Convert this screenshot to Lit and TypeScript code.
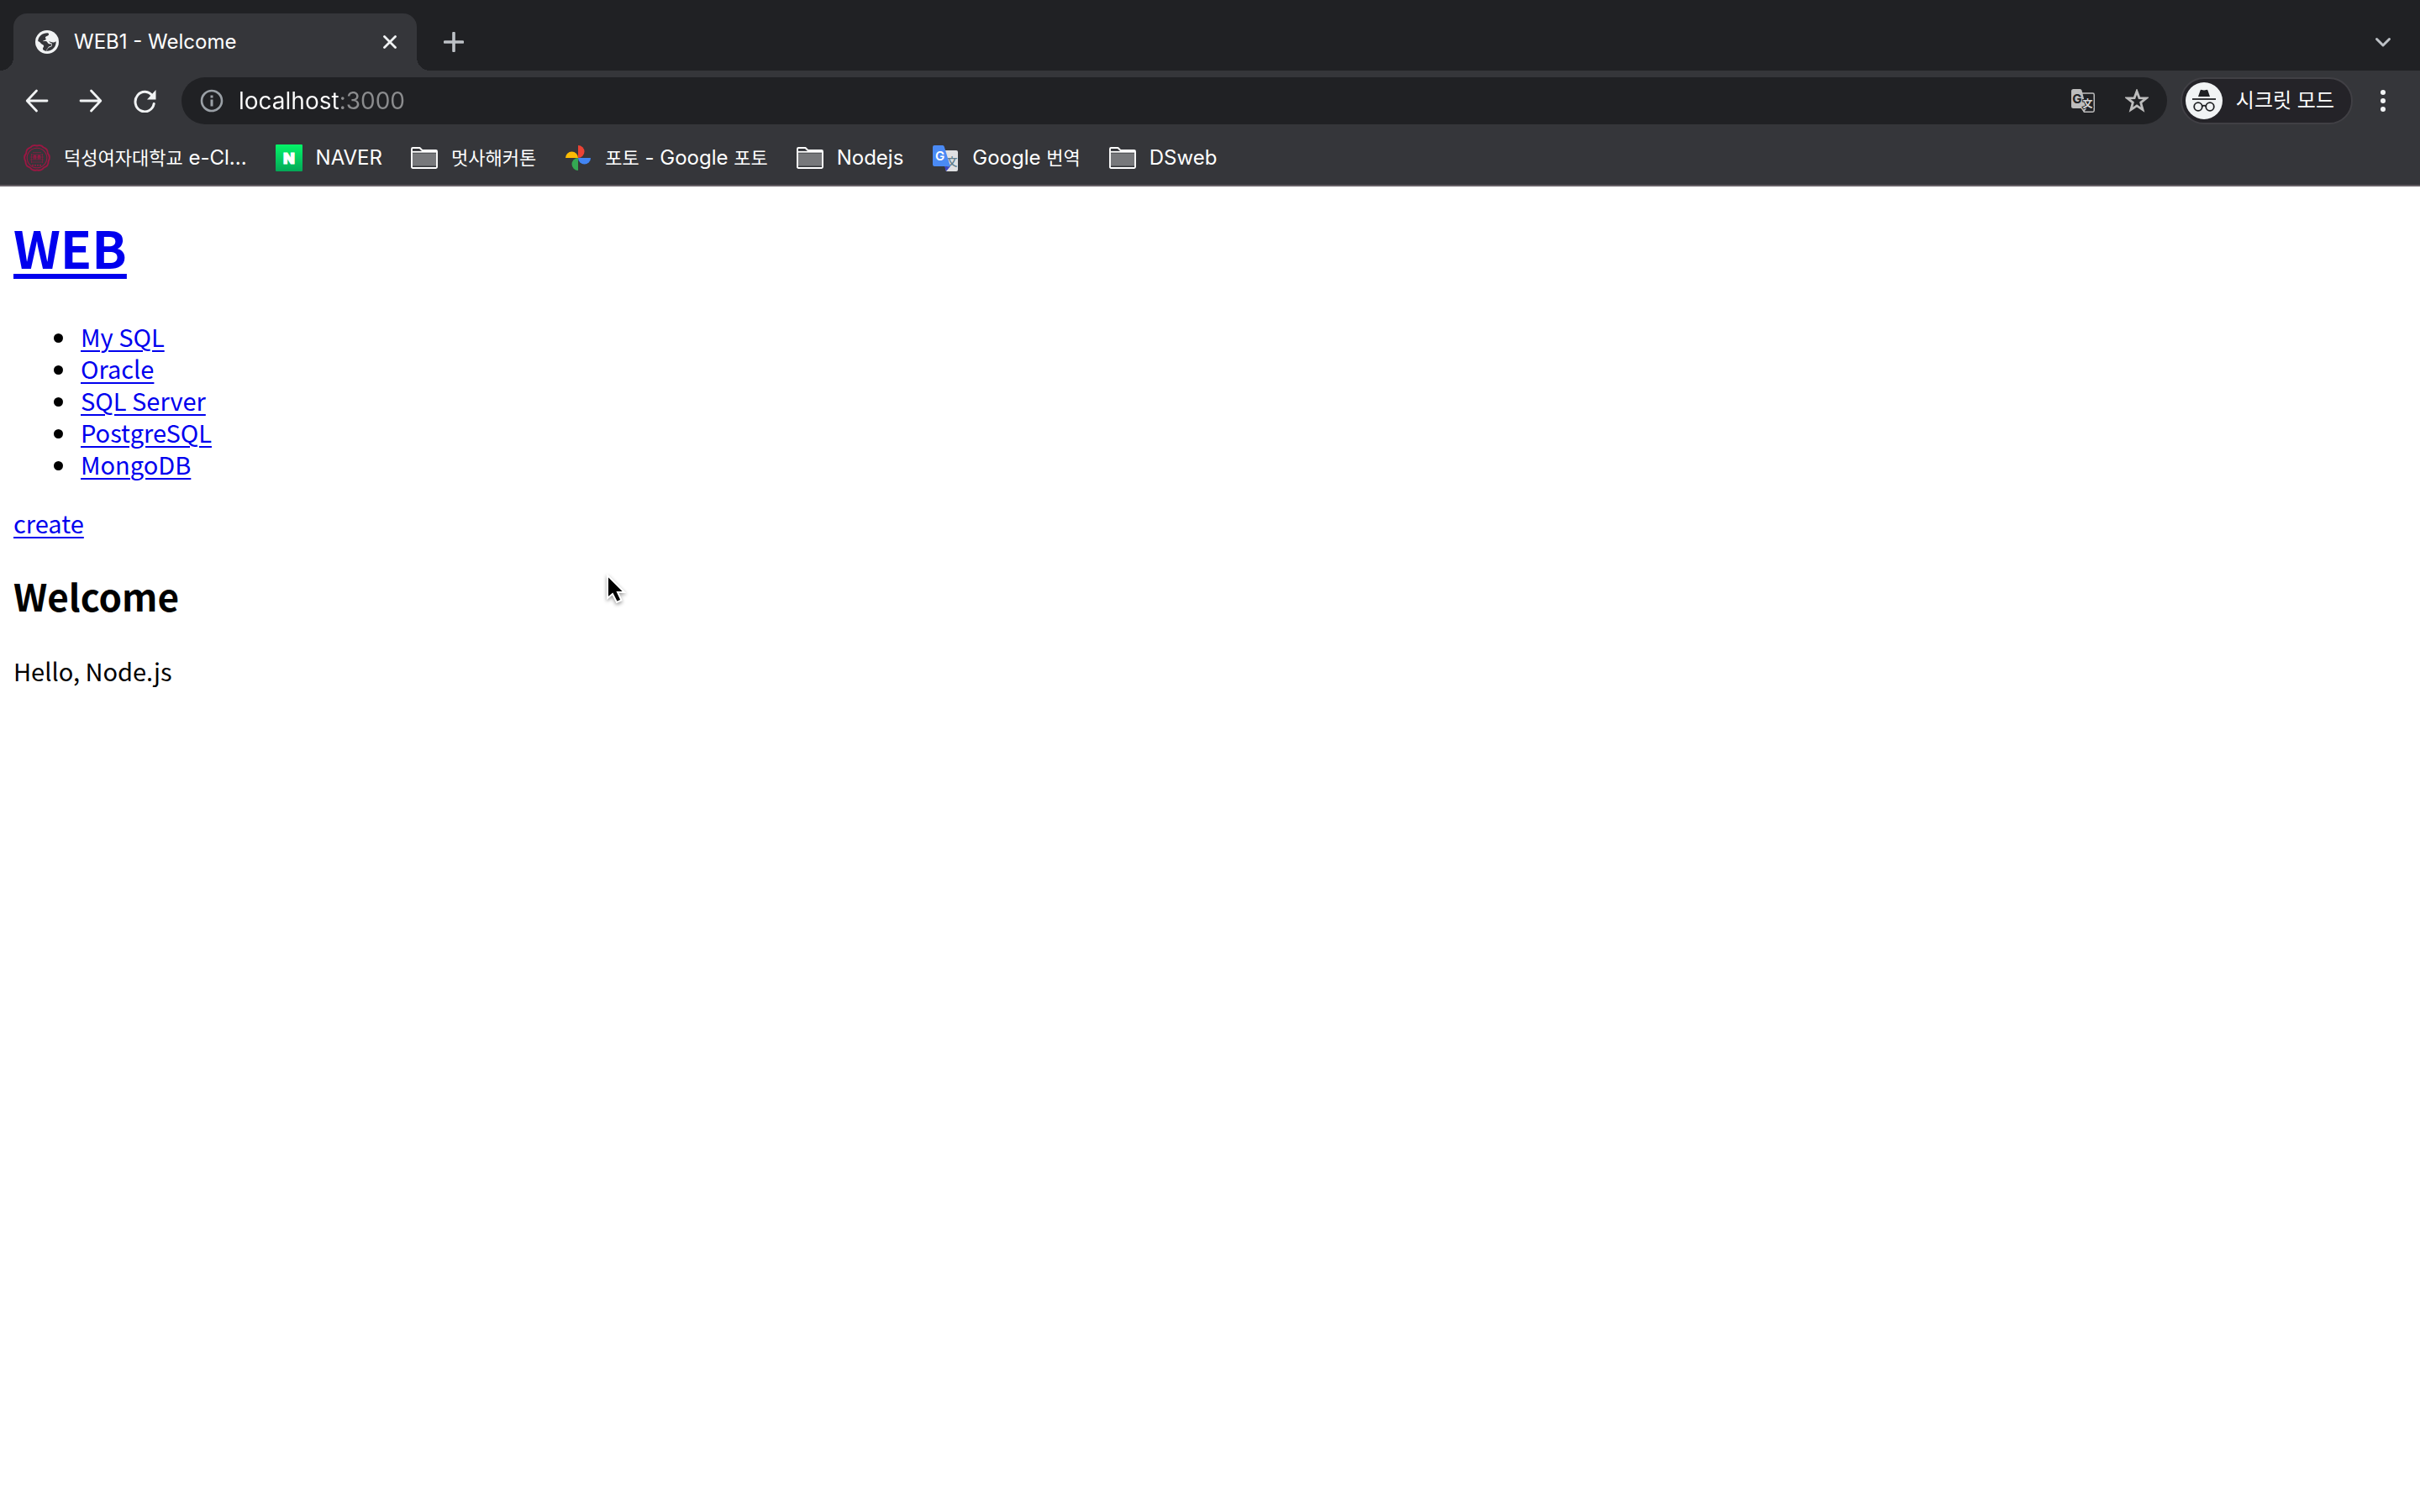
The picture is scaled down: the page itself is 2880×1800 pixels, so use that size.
import { LitElement, html, css, TemplateResult } from "lit";
import { customElement, property } from "lit/decorators.js";

const globe = html`<svg class="i28" viewBox="0 0 28 28" aria-hidden="true">
  <circle cx="14" cy="14" r="14" fill="#f1f3f4"/>
  <path d="M3.200 13C3.500 7.500 8.300 3.300 14.500 3.300C16 3.600 16.500 4.500 15.800 5.800C14.800 7.500 12.600 6.600 12 8.300C11.600 9.800 13.400 10 12.500 11.200C11.500 12.300 9.800 11.500 8.800 13.200C12 13.100 13.200 12.800 14.300 14.300C15.200 15.800 16 16.400 17.800 16.500H19.500C19.500 18.500 18.500 19.200 16.800 19.300C15.500 19.500 15.400 21 14.500 21.800C13.500 22.700 12.800 23.800 14 24.700C10.500 24.800 8.500 23 9 21.500C9.500 20 10.500 19.500 10 18.200C9.500 17 7.800 17.200 6.800 15.800C6 14.600 4.600 13.300 3.200 13Z" fill="#35363a"/>
  <path d="M24.700 13.200C24.900 19.500 20.500 24.600 14 24.700C13 23.700 14.300 22.700 15 21.800C16 20.600 17 20 18.200 19.800C20 19.300 20.300 17.600 19.800 15.700C18.200 15.200 17 14.300 16.300 13C19 14.500 22 15.300 24.700 13.200Z" fill="#35363a"/>
</svg>`;

const close = html`<svg class="i16" viewBox="0 0 16 16" aria-hidden="true"><path d="M1.500 1.500L14.500 14.500M14.500 1.500L1.500 14.500" stroke="#f1f3f4" stroke-width="2.800" stroke-linecap="round"/></svg>`;
const plus = html`<svg class="i24" viewBox="0 0 24 24" aria-hidden="true"><path d="M12 1.500V22.500M1.500 12H22.500" stroke="#bdc1c6" stroke-width="3.600" stroke-linecap="round"/></svg>`;
const chevron = html`<svg class="i24" viewBox="0 0 24 24" aria-hidden="true"><path d="M4.500 8.500L12 16L19.500 8.500" fill="none" stroke="#bdc1c6" stroke-width="3" stroke-linecap="round" stroke-linejoin="round"/></svg>`;
const back = html`<svg class="i28" viewBox="0 0 28 28" aria-hidden="true"><path d="M13.500 2L2.200 14L13.500 26M2.500 14H26" fill="none" stroke="#f1f3f4" stroke-width="2.800" stroke-linecap="round" stroke-linejoin="round"/></svg>`;
const forward = html`<svg class="i28" viewBox="0 0 28 28" aria-hidden="true"><path d="M14.500 2L25.800 14L14.500 26M25.500 14H2" fill="none" stroke="#f1f3f4" stroke-width="2.800" stroke-linecap="round" stroke-linejoin="round"/></svg>`;
const reload = html`<svg class="i28" viewBox="0 0 28 28" aria-hidden="true"><path d="M23.500 8.500A11.200 11.800 0 1 0 25.200 17.500" fill="none" stroke="#f1f3f4" stroke-width="3" stroke-linecap="round"/><path d="M27.500 1V12.500H17Z" fill="#f1f3f4"/></svg>`;
const info = html`<svg class="i28" viewBox="0 0 28 28" aria-hidden="true"><circle cx="14" cy="14" r="12" fill="none" stroke="#9aa0a6" stroke-width="2.600"/><path d="M14 12.500V20.500M14 7.600V10.400" stroke="#9aa0a6" stroke-width="3"/></svg>`;
const star = html`<svg class="i28" viewBox="0 0 28 28" aria-hidden="true"><path d="M14 2.800L16.900 10.600L25.200 10.900L18.700 16.100L21 24.600L14 19.900L7 24.600L9.300 16.100L2.800 10.900L11.100 10.600Z" fill="none" stroke="#bdbdbd" stroke-width="2.800"/></svg>`;
const kebab = html`<svg class="i28" viewBox="0 0 28 28" aria-hidden="true"><g fill="#f1f3f4"><circle cx="14" cy="4" r="3"/><circle cx="14" cy="14" r="3"/><circle cx="14" cy="24" r="3"/></g></svg>`;
const translateMono = html`<svg class="i28" viewBox="0 0 28 28" aria-hidden="true">
  <path d="M12 5H25.500A1.700 1.700 0 0 1 27.200 6.700V25.500A1.700 1.700 0 0 1 25.500 27.200H15.500L12 22" fill="none" stroke="#bdbdbd" stroke-width="1.500"/>
  <path d="M2.500 0H10.500Q12 0 12.500 1.500L18 23.500L14.800 27.500L12.500 23H2.500Q0 23 0 20.500V2.500Q0 0 2.500 0Z" fill="#bdbdbd"/>
  <text x="7" y="17" text-anchor="middle" font-family="Inter, sans-serif" font-weight="700" font-size="15" fill="#202124">G</text>
  <text x="19.500" y="22" text-anchor="middle" font-family="'Noto Sans CJK KR', sans-serif" font-weight="700" font-size="12" fill="#d5d5d5" stroke="#202124" stroke-width="2" paint-order="stroke">文</text></svg>`;
const incognito = html`<svg class="i44" viewBox="0 0 44 44" aria-hidden="true">
  <circle cx="22" cy="22" r="22" fill="#f1f3f4"/>
  <path d="M15 17L17.600 9.600Q18 8.600 19.200 8.900L22 9.500L24.800 8.900Q26 8.600 26.400 9.600L29 17Z" fill="#202124"/>
  <path d="M8 20H36" stroke="#202124" stroke-width="1.800"/>
  <g fill="none" stroke="#202124" stroke-width="1.800"><circle cx="15" cy="29" r="4.800"/><circle cx="29" cy="29" r="4.800"/><path d="M19.800 28.500Q22 26.800 24.200 28.500"/></g></svg>`;

const folder = html`<svg class="i32" viewBox="0 0 32 32" aria-hidden="true">
  <path d="M2 10.500H30V25.500H2Z" fill="#77787b"/><path d="M2 8.800H30" stroke="#fff" stroke-width="1.800"/>
  <path d="M1 5.200Q1 4 2.200 4H10.500L13.500 7H29.800Q31 7 31 8.200V26.800Q31 28 29.800 28H2.200Q1 28 1 26.800Z" fill="none" stroke="#fff" stroke-width="1.900" stroke-linejoin="round"/></svg>`;
const seal = html`<svg class="i32" viewBox="0 0 32 32" aria-hidden="true"><g fill="none" stroke="#9b1743">
  <path d="M16 1.500C19 .6 22 1.200 23.500 3.400C27 4.500 29 7 28.800 10.500C31 13 31.300 17 29.600 20C29.700 24 27.500 26.700 24 27.700C22 30.500 19 31.300 16 30.300C13 31.300 10 30.500 8 27.700C4.500 26.700 2.300 24 2.400 20C.7 17 1 13 3.200 10.500C3 7 5 4.500 8.500 3.400C10 1.200 13 .6 16 1.500Z" stroke-width="1.900"/>
  <circle cx="16" cy="16" r="11.800" stroke-width="1.100"/>
  <path d="M9 12H23M8 15H24M8 18H24M9 21H23M11 9.500H21M9.500 11V22M22.500 11V22" stroke-width=".6"/>
  <path d="M12.500 17.500V13.500H14.500V17.500M17.500 17.500V13.500H19.500V17.500" stroke-width="1.300"/><path d="M10 24.800H22" stroke-width="1.600" stroke-dasharray="2 1"/></g></svg>`;
const naver = html`<svg class="i32" viewBox="0 0 32 32" aria-hidden="true"><defs><linearGradient id="nv" x2="0" y2="1"><stop stop-color="#04f568"/><stop offset="1" stop-color="#04a857"/></linearGradient></defs><rect width="32" height="32" rx="1" fill="url(#nv)"/><text x="16" y="23" text-anchor="middle" font-family="Inter, sans-serif" font-size="18" font-weight="900" fill="#fff" stroke="#fff" stroke-width="1">N</text></svg>`;
const photos = html`<svg class="i32" viewBox="0 0 32 32" aria-hidden="true">
  <path d="M16 1A7.500 7.500 0 0 1 16 16Z" fill="#ea4335"/><path d="M31 16A7.500 7.500 0 0 1 16 16Z" fill="#4285f4"/>
  <path d="M16 31A7.500 7.500 0 0 1 16 16Z" fill="#34a853"/><path d="M1 16A7.500 7.500 0 0 1 16 16Z" fill="#fbbc04"/></svg>`;
const translate = html`<svg class="i32" viewBox="0 0 32 32" aria-hidden="true">
  <path d="M12 7H29Q31 7 31 9V30Q31 32 29 32H17Z" fill="#dfe0e2"/><path d="M15 26H22L17 32Z" fill="#3a45c4"/>
  <text x="24" y="25" text-anchor="middle" font-family="'Noto Sans CJK KR', sans-serif" font-size="13" font-weight="500" fill="#607d8b">文</text>
  <path d="M3 1H13Q14.300 1 14.700 2.500L22 26H3Q1 26 1 24V3Q1 1 3 1Z" fill="#4a8af4"/>
  <text x="9.500" y="19" text-anchor="middle" font-family="Inter, sans-serif" font-size="15" font-weight="600" fill="#fff">G</text></svg>`;

interface Bookmark { icon: TemplateResult; label: string; }
const bookmarks: Bookmark[] = [
  { icon: seal, label: "덕성여자대학교 e-Cl..." },
  { icon: naver, label: "NAVER" },
  { icon: folder, label: "멋사해커톤" },
  { icon: photos, label: "포토 - Google 포토" },
  { icon: folder, label: "Nodejs" },
  { icon: translate, label: "Google 번역" },
  { icon: folder, label: "DSweb" },
];
const topics = ["My SQL", "Oracle", "SQL Server", "PostgreSQL", "MongoDB"];

const base = css`
  * { box-sizing: border-box; }
  svg { display: block; flex: none; }
  button { display: flex; align-items: center; justify-content: center; border: 0; padding: 0; background: none; color: inherit; font: inherit; }
  .i16 { width: 16px; height: 16px; }
  .i24 { width: 24px; height: 24px; }
  .i28 { width: 28px; height: 28px; }
  .i32 { width: 32px; height: 32px; }
  .i44 { width: 44px; height: 44px; }
`;

@customElement("tab-strip")
class TabStrip extends LitElement {
  @property() label = "";
  static styles = [base, css`
    :host { display: flex; align-items: flex-end; height: 84px; padding: 0 32px 0 16px; background: #202124; }
    .tab { position: relative; display: flex; align-items: center; gap: 18px; width: 480px; height: 68px; padding: 0 24px 0 26px; border-radius: 16px 16px 0 0; background: #35363a; color: #fff; }
    .tab::before, .tab::after { content: ""; position: absolute; bottom: 0; width: 16px; height: 16px; }
    .tab::before { right: 100%; background: radial-gradient(circle at 0 0, #202124 16px, #35363a 16px); }
    .tab::after { left: 100%; background: radial-gradient(circle at 100% 0, #202124 16px, #35363a 16px); }
    .title { flex: 1; white-space: nowrap; }
    .new { width: 56px; height: 68px; margin-left: 16px; }
    .search { width: 24px; height: 68px; margin-left: auto; }
  `];
  render() {
    return html`
      <div class="tab">${globe}<span class="title">${this.label}</span><button aria-label="탭 닫기">${close}</button></div>
      <button class="new" aria-label="새 탭">${plus}</button>
      <button class="search" aria-label="탭 검색">${chevron}</button>`;
  }
}

@customElement("nav-toolbar")
class NavToolbar extends LitElement {
  @property() url = "";
  static styles = [base, css`
    :host { display: flex; align-items: center; padding: 8px 30px 8px 12px; background: #35363a; }
    .nav { width: 64px; height: 56px; }
    .box { flex: 1; display: flex; align-items: center; height: 56px; margin: 0 16px 0 12px; padding: 0 22px; border-radius: 28px; background: #202124; }
    .url { flex: 1; min-width: 0; height: 56px; margin-left: 18px; padding: 0; border: 0; outline: 0; font: 28px/56px Inter, "Noto Sans CJK KR", sans-serif; color: transparent; background: linear-gradient(90deg, #fff 121px, #8b8c8e 121px); background-clip: text; -webkit-background-clip: text; }
    .action { width: 28px; height: 56px; margin-left: 36px; }
    .chip { height: 56px; gap: 16px; padding: 0 20px 0 4px; border: 2px solid #414045; border-radius: 28px; background: #242328; color: #fff; white-space: nowrap; }
    .menu { width: 28px; height: 56px; margin-left: 22px; }
  `];
  render() {
    return html`
      <button class="nav" aria-label="뒤로">${back}</button>
      <button class="nav" aria-label="앞으로">${forward}</button>
      <button class="nav" aria-label="새로고침">${reload}</button>
      <div class="box">${info}
        <input class="url" type="text" aria-label="주소창" .value=${this.url}>
        <button class="action" aria-label="번역">${translateMono}</button>
        <button class="action" aria-label="북마크 추가">${star}</button>
      </div>
      <button class="chip">${incognito}<span>시크릿 모드</span></button>
      <button class="menu" aria-label="메뉴">${kebab}</button>`;
  }
}

@customElement("bookmark-bar")
class BookmarkBar extends LitElement {
  static styles = [base, css`
    :host { display: flex; align-items: center; gap: 34px; height: 64px; padding: 0 28px; background: #35363a; border-bottom: 2px solid #655f65; color: #fff; }
    .item { display: flex; align-items: center; gap: 16px; color: inherit; text-decoration: none; white-space: nowrap; line-height: 32px; }
    .ko { font-size: 22px; }
  `];
  render() {
    return bookmarks.map(({ icon, label }) => html`<a class="item" href="#">${icon}<span>${label.split(/([가-힣]+)/).map((part) => /[가-힣]/.test(part) ? html`<span class="ko">${part}</span>` : part)}</span></a>`);
  }
}

@customElement("web-page")
class WebPage extends LitElement {
  static styles = css`
    :host { display: block; padding: 34px 16px; color: #000; font: 29px/38px "Noto Sans CJK KR", sans-serif; }
    h1 { margin: 0 0 49px; font-size: 61px; line-height: 76px; }
    h2 { margin: 40px 0 42px; font-size: 44px; line-height: 56px; }
    ul { margin: 0 0 32px; padding-left: 77px; }
    li { padding-left: 3px; }
    a { color: #0000ee; text-decoration-thickness: 2px; text-underline-offset: 4px; }
    h1 a { text-decoration-thickness: 6px; text-underline-offset: 6px; }
    p { margin: 0; }
  `;
  render() {
    return html`
      <h1><a href="#">WEB</a></h1>
      <ul>${topics.map((t) => html`<li><a href="#">${t}</a></li>`)}</ul>
      <a href="#">create</a>
      <h2>Welcome</h2>
      <p>Hello, Node.js</p>`;
  }
}

@customElement("app-root")
class AppRoot extends LitElement {
  static styles = css`
    :host { position: relative; display: flex; flex-direction: column; min-height: 100vh; background: #fff; font: 24px/32px Inter, "Noto Sans CJK KR", sans-serif; }
    web-page { flex: 1; }
    .cursor { position: absolute; left: 716px; top: 680px; width: 36px; height: 44px; filter: drop-shadow(0 2px 2px rgba(0, 0, 0, .4)); }
  `;
  render() {
    return html`
      <tab-strip label="WEB1 - Welcome"></tab-strip>
      <nav-toolbar url="localhost:3000"></nav-toolbar>
      <bookmark-bar></bookmark-bar>
      <web-page></web-page>
      <svg class="cursor" viewBox="0 0 36 44" aria-hidden="true"><path d="M7 5V32L13 27L18 37L23.500 34.500L19 25H27Z" fill="#000" stroke="#fff" stroke-width="2"/></svg>`;
  }
}
